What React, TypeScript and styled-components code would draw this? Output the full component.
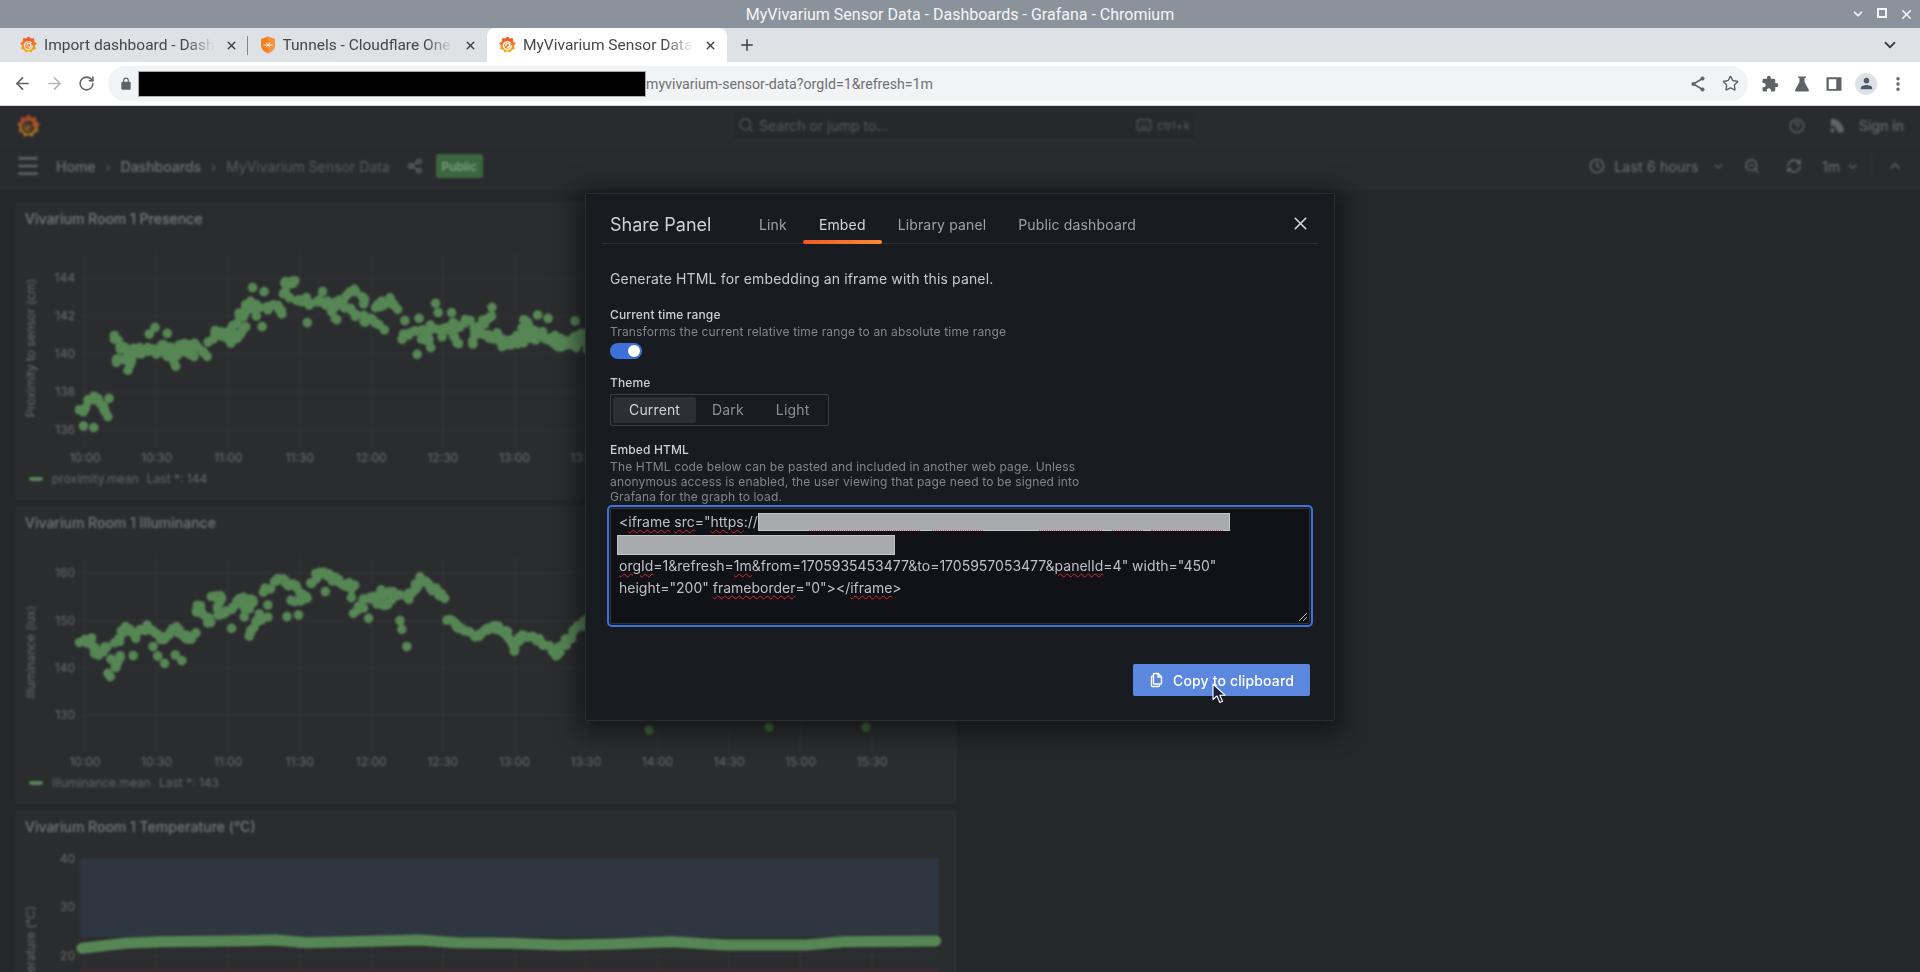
import React from 'react';
import styled, { createGlobalStyle } from 'styled-components';
import {
	ArrowLeft, ArrowRight, ChevronDown, ChevronUp, CircleHelp, Clock, Keyboard, Menu, MoreVertical,
	Plus, RefreshCw, RotateCw, Search, Share2, Star, X, ZoomOut,
} from 'lucide-react';

const GlobalStyle = createGlobalStyle`
  html, body {
    margin: 0;
    padding: 0;
    width: 1920px;
    height: 972px;
    overflow: hidden;
    background: #26272a;
  }
  * { box-sizing: border-box; }
`;

const GREEN = '#578655';

type TPoint = [number, number];

const hash = (n: number): number => {
	const s = Math.sin(n * 127.1) * 43758.5453;
	return s - Math.floor(s);
};

// walks a polyline and drops a jittered dot every few px, the scatter looks close enough to the real series
const trail = (points: TPoint[], seed: number, step = 3.5, jitter = 5): TPoint[] => {
	const dots: TPoint[] = [];
	let n = seed * 100;
	for (let i = 0; i < points.length - 1; i++) {
		const [x1, y1] = points[i];
		const [x2, y2] = points[i + 1];
		const len = Math.hypot(x2 - x1, y2 - y1);
		const count = Math.max(1, Math.round(len / step));
		for (let c = 0; c <= count; c++) {
			n += 1;
			dots.push([
				x1 + ((x2 - x1) * c) / count + (hash(n) - 0.5) * jitter,
				y1 + ((y2 - y1) * c) / count + (hash(n + 0.5) - 0.5) * jitter * 1.6,
			]);
		}
	}
	return dots;
};

const fromZoom = (baseY: number) => (list: TPoint[]): TPoint[] => list.map(([x, y]) => [x / 2.613, baseY + y / 3]);

const presenceTrails: TPoint[][] = [
	[[212, 668], [232, 632], [255, 628], [270, 655], [280, 680]],
	[[293, 440], [320, 475], [345, 505], [332, 545]],
	[[298, 518], [340, 518]],
	[[345, 470], [370, 488], [420, 472], [456, 518]],
	[[350, 490], [440, 485], [500, 465], [530, 480], [543, 500]],
	[[440, 490], [510, 490]],
	[[548, 448], [600, 430], [630, 380], [652, 345]],
	[[560, 420], [600, 450], [640, 420]],
	[[655, 345], [720, 350], [740, 380]],
	[[740, 305], [750, 280], [775, 278]],
	[[760, 330], [850, 340], [875, 385]],
	[[870, 350], [925, 310], [955, 330]],
	[[905, 360], [960, 390], [1000, 420]],
	[[975, 360], [1018, 330], [1040, 355]],
	[[1050, 437], [1100, 420], [1185, 405], [1195, 470]],
	[[1100, 450], [1125, 462]],
	[[1160, 430], [1225, 395]],
	[[1230, 455], [1288, 362]],
	[[1240, 420], [1300, 440], [1330, 460], [1375, 400], [1470, 470], [1530, 420]],
	[[1300, 460], [1440, 440], [1530, 470]],
];

const presenceSingles: TPoint[] = [
	[218, 708], [245, 713], [285, 625], [390, 432], [405, 412], [437, 430], [660, 293], [690, 305], [803, 398],
	[685, 410], [670, 378], [843, 305], [1090, 493], [1138, 340], [1145, 368], [1180, 368], [1095, 385], [1058, 392],
	[1405, 375], [1432, 385], [1503, 393],
];

const illuminanceTrails: TPoint[][] = [
	[[210, 425], [235, 420], [255, 460], [280, 435]],
	[[295, 480], [300, 495], [315, 470]],
	[[305, 425], [330, 385], [350, 410], [380, 380], [425, 425], [460, 385], [490, 415], [508, 395]],
	[[510, 335], [520, 315], [550, 370]],
	[[555, 290], [580, 290], [570, 330]],
	[[570, 350], [635, 295], [660, 300], [640, 345]],
	[[650, 405], [680, 350], [695, 350]],
	[[690, 268], [735, 240], [770, 265], [800, 295], [765, 295]],
	[[810, 250], [835, 220], [880, 240], [930, 265]],
	[[925, 335], [945, 320]],
	[[945, 295], [1000, 275], [1065, 295], [1100, 240], [1135, 265], [1160, 290]],
	[[982, 312], [1025, 305]],
	[[1170, 355], [1200, 385], [1250, 410], [1290, 378], [1320, 395], [1350, 455]],
	[[1340, 435], [1365, 410], [1405, 425], [1455, 460], [1490, 410], [1530, 355]],
];

const illuminanceSingles: TPoint[] = [
	[282, 520], [288, 530], [348, 467], [400, 440], [412, 468], [430, 490], [458, 465], [475, 482], [605, 385],
	[700, 315], [750, 350], [780, 345], [850, 275], [918, 293], [963, 355], [1045, 362], [1050, 388], [1063, 440],
];

const presenceDots: TPoint[] = [
	...presenceTrails.flatMap((t, i) => trail(fromZoom(190)(t), i + 1)),
	...fromZoom(190)(presenceSingles),
];

const illuminanceDots: TPoint[] = [
	...illuminanceTrails.flatMap((t, i) => trail(fromZoom(500)(t), i + 40, 3.2, 4)),
	...fromZoom(500)(illuminanceSingles),
];

const temperatureLine: TPoint[] = [
	[131, 475], [200, 460], [260, 455], [400, 452], [440, 450], [490, 458], [560, 455], [670, 450], [730, 458],
	[820, 460], [900, 465], [980, 462], [1075, 455], [1160, 465], [1290, 465], [1350, 455], [1497, 453],
];
const temperaturePath = temperatureLine
	.map(([x, y], i) => `${i ? 'L' : 'M'}${(x / 1.6).toFixed(1)} ${(790 + y / 3).toFixed(1)}`)
	.join(' ');

const X_LABELS = ['10:00', '10:30', '11:00', '11:30', '12:00', '12:30', '13:00', '13:30', '14:00', '14:30', '15:00', '15:30'];
const xAt = (i: number): number => 85 + i * 71.56;

const URL_SQUIGGLES: [number, number][] = [[50, 111], [173, 51], [280, 63], [353, 31], [392, 72]];

const Root = styled.div`
  width: 1920px;
  height: 972px;
  display: flex;
  flex-direction: column;
  overflow: hidden;
  font-family: Roboto, "Liberation Sans", sans-serif;
`;

const TitleBar = styled.div`
  height: 28px;
  flex: none;
  background: #8a939c;
  color: #f4f5f6;
  font-size: 16px;
  display: grid;
  grid-template-columns: 1fr auto 1fr;
  align-items: center;
`;

const WindowTitle = styled.span`
  grid-column: 2;
`;

const WindowControls = styled.div`
  grid-column: 3;
  justify-self: end;
  display: flex;
  padding-right: 2px;
  & > * { width: 24px; display: flex; justify-content: center; }
`;

const TabStrip = styled.div`
  height: 34px;
  flex: none;
  background: #dee1e6;
  display: flex;
  align-items: stretch;
  padding-left: 8px;
`;

const Tab = styled.div<{ $active?: boolean; $divider?: boolean }>`
  position: relative;
  width: 239.5px;
  padding-left: 12px;
  display: flex;
  align-items: center;
  color: #45474a;
  font-size: 15.5px;
  background: ${(p) => (p.$active ? '#fff' : 'transparent')};
  border-radius: 8px 8px 0 0;
  ${(p) => p.$divider && `
    &::after {
      content: '';
      position: absolute;
      right: 0;
      top: 8px;
      bottom: 7px;
      width: 1px;
      background: #85878b;
    }
  `}
`;

const TabTitle = styled.span`
  width: 170px;
  margin-left: 7px;
  white-space: nowrap;
  overflow: hidden;
  -webkit-mask-image: linear-gradient(to right, #000 84%, transparent 100%);
  mask-image: linear-gradient(to right, #000 84%, transparent 100%);
`;

const TabClose = styled.span`
  margin-left: 11px;
  display: flex;
  color: #3c3e41;
`;

const NewTab = styled.span`
  margin-left: 11px;
  display: flex;
  align-items: center;
  color: #3c4043;
`;

const StripEnd = styled.span`
  margin-left: auto;
  padding-right: 21px;
  display: flex;
  align-items: center;
  color: #3c4043;
`;

const Toolbar = styled.div`
  height: 44px;
  flex: none;
  background: #fff;
  border-bottom: 1px solid #d4d5d7;
  padding: 4px 6px 4px 6px;
  display: flex;
  align-items: flex-start;
`;

const ToolButton = styled.span<{ $muted?: boolean }>`
  width: 32px;
  height: 35px;
  display: flex;
  align-items: center;
  justify-content: center;
  color: ${(p) => (p.$muted ? '#b5b7ba' : '#5f6368')};
`;

const Omnibox = styled.div`
  width: 1640px;
  height: 35px;
  margin: 0 6px;
  background: #f1f3f4;
  border-radius: 18px;
  display: flex;
  align-items: center;
  padding-left: 11px;
  padding-right: 9px;
  color: #5f6368;
`;

const UrlMask = styled.span`
  width: 508px;
  height: 26px;
  margin-left: 5px;
  background: #000;
  border: 1px solid #a9abad;
`;

const UrlText = styled.span`
  color: #6f7175;
  font-size: 14.15px;
`;

const OmniEnd = styled.span`
  margin-left: auto;
  display: flex;
  gap: 15px;
  align-items: center;
`;

const Avatar = styled.span`
  width: 22px;
  height: 22px;
  border-radius: 50%;
  background: #dee1e6;
  display: flex;
  align-items: center;
  justify-content: center;
  color: #4d5a6b;
`;

const GrafanaArea = styled.div`
  position: relative;
  flex: 1;
  min-height: 0;
  overflow: hidden;
  background: #26272a;
  font-family: Inter, "Liberation Sans", sans-serif;
`;

const Blurred = styled.div`
  height: 100%;
  filter: blur(1px);
`;

const TopNav = styled.div`
  height: 40px;
  background: #2a2b2e;
  border-bottom: 1px solid #2d2e31;
  display: grid;
  grid-template-columns: 732px 465px 1fr;
  align-items: center;
`;

const LogoSlot = styled.div`
  padding: 2px 0 0 17px;
  display: flex;
  opacity: 0.6;
`;

const SearchBox = styled.div`
  height: 29px;
  margin-top: -1px;
  background: #27282b;
  border: 1px solid #2d2e31;
  color: #54565a;
  font-size: 14px;
  display: flex;
  align-items: center;
  padding: 0 6px 0 5px;
`;

const SearchText = styled.span`
  margin-left: 5px;
`;

const Shortcut = styled.span`
  margin-left: auto;
  display: flex;
  align-items: center;
  gap: 5px;
  font-size: 12px;
`;

const NavEnd = styled.div`
  display: flex;
  justify-content: flex-end;
  align-items: center;
  gap: 24px;
  padding-right: 16px;
  color: #626366;
`;

const SignIn = styled.span`
  margin-left: -11px;
  font-size: 14px;
  font-weight: 500;
`;

const SubNav = styled.div`
  height: 44px;
  background: #2a2b2e;
  display: flex;
  align-items: center;
  padding: 0 17px 4px 15px;
  color: #6b6c6f;
  font-size: 14px;
`;

const Crumb = styled.span<{ $current?: boolean }>`
  font-weight: ${(p) => (p.$current ? 400 : 500)};
  color: ${(p) => (p.$current ? '#56585c' : '#6b6c6f')};
`;

const CrumbSep = styled.span`
  width: 25px;
  text-align: center;
  color: #55575a;
`;

const Spaced = styled.span<{ $ml: number }>`
  margin-left: ${(p) => p.$ml}px;
  display: flex;
  align-items: center;
`;

const RangeLabel = styled(Spaced)`
  letter-spacing: 0.2px;
`;

const PublicBadge = styled.span`
  margin-left: 13px;
  width: 47px;
  height: 24px;
  border-radius: 2px;
  background: #3b653e;
  color: #7fa880;
  font-size: 12px;
  font-weight: 500;
  display: flex;
  align-items: center;
  justify-content: center;
`;

const SubNavEnd = styled.div`
  margin-left: auto;
  display: flex;
  align-items: center;
`;

const Divider = styled.span`
  margin-left: 12px;
  width: 1px;
  height: 24px;
  background: #333437;
`;

const PanelColumn = styled.div`
  width: 940px;
  margin: 13px 0 0 16px;
  display: flex;
  flex-direction: column;
  gap: 8px;
`;

const Panel = styled.section`
  height: 296px;
  flex: none;
  background: #2b2c2e;
  border: 1px solid #2f3032;
  display: flex;
  flex-direction: column;
`;

const PanelTitle = styled.h2`
  margin: 0;
  height: 31px;
  padding: 6px 0 0 8px;
  color: #77787b;
  font-size: 14px;
  line-height: 18px;
  font-weight: 500;
`;

const ChartSvg = styled.svg`
  display: block;
  width: 938px;
  height: 232px;
  flex: none;
`;

const AxisText = styled.text`
  fill: #696a6d;
  font-size: 12px;
  font-family: Inter, "Liberation Sans", sans-serif;
`;

const Legend = styled.div`
  height: 23px;
  padding-left: 12px;
  display: flex;
  align-items: center;
  color: #66676a;
  font-size: 12px;
`;

const LegendSwatch = styled.i`
  width: 14px;
  height: 4px;
  margin-right: 9px;
  border-radius: 2px;
  background: ${GREEN};
`;

const LegendValue = styled.span`
  margin-left: 8px;
`;

const Dialog = styled.div`
  position: absolute;
  left: 585px;
  top: 87px;
  width: 750px;
  background: #181b20;
  border: 1px solid #2a2d31;
  border-radius: 2px;
  box-shadow: 0 4px 24px 6px rgba(5, 6, 9, 0.6);
  padding: 0 24px 24px;
  color: #ccccd4;
  letter-spacing: 0.15px;
`;

const DialogHeader = styled.div`
  margin: 0 -8px;
  padding: 0 8px;
  height: 50px;
  border-bottom: 1px solid #2c2f34;
  display: flex;
  align-items: flex-end;
`;

const DialogTitle = styled.h1`
  width: 133px;
  height: 40px;
  margin: 0;
  font-size: 18px;
  font-weight: 400;
  line-height: 44px;
  letter-spacing: 0;
  color: #d0d1d7;
`;

const TabBar = styled.div`
  display: flex;
`;

const ShareTab = styled.span<{ $active?: boolean }>`
  position: relative;
  height: 40px;
  padding: 0 16px;
  font-size: 14px;
  line-height: 44px;
  color: ${(p) => (p.$active ? '#d6d7dc' : '#a0a1a8')};
  ${(p) => p.$active && `
    &::after {
      content: '';
      position: absolute;
      left: 0;
      right: 0;
      bottom: -1px;
      height: 4px;
      border-radius: 2px;
      background: linear-gradient(90deg, #f05a28, #fb8a32);
    }
  `}
`;

const CloseButton = styled.span`
  margin-left: auto;
  height: 40px;
  display: flex;
  align-items: center;
  margin-top: -8px;
  margin-right: -1px;
  color: #dcdde1;
`;

const Lead = styled.p`
  margin: 25px 0 0;
  font-size: 14px;
  line-height: 20px;
  color: #c9cad0;
`;

const FieldLabel = styled.label<{ $mt: number }>`
  display: block;
  margin-top: ${(p) => p.$mt}px;
  font-size: 12px;
  line-height: 16px;
  font-weight: 500;
  color: #cfd0d6;
`;

const FieldHint = styled.p`
  margin: 1px 0 0;
  max-width: 480px;
  font-size: 12px;
  line-height: 16px;
  color: #84868c;
`;

const EmbedHint = styled(FieldHint)`
  line-height: 15px;
`;

const Toggle = styled.span`
  display: flex;
  align-items: center;
  justify-content: flex-end;
  width: 32px;
  height: 16px;
  margin-top: 3px;
  padding-right: 2px;
  border-radius: 8px;
  background: #3d71d9;
  &::after {
    content: '';
    width: 12px;
    height: 12px;
    border-radius: 50%;
    background: #fff;
  }
`;

const RadioGroup = styled.div`
  width: 219px;
  height: 32px;
  margin-top: 3px;
  padding: 2px;
  border: 1px solid #3d3f44;
  border-radius: 2px;
  display: flex;
`;

const RadioOption = styled.span<{ $active?: boolean }>`
  padding: 0 16px;
  line-height: 26px;
  font-size: 14px;
  border-radius: 2px;
  color: ${(p) => (p.$active ? '#d2d3d8' : '#8f9096')};
  background: ${(p) => (p.$active ? '#2c3036' : 'transparent')};
`;

const CodeBox = styled.div`
  position: relative;
  height: 116px;
  margin-top: 4px;
  padding: 2px 8px;
  background: #111217;
  border: 1px solid #2f3136;
  border-radius: 2px;
  box-shadow: 0 0 0 1px #181b20, 0 0 0 3px #3d71d9;
  color: #bfc0c5;
  font-size: 14px;
  line-height: 22px;
  letter-spacing: 0;
`;

const CodeLine = styled.div`
  height: 22px;
  white-space: nowrap;
`;

const Misspelt = styled.span`
  text-decoration: underline wavy #d8262c 1px;
  text-underline-offset: 2px;
`;

const Redacted = styled.span<{ $width: number; $height: number }>`
  position: relative;
  display: inline-block;
  vertical-align: top;
  margin-top: 2px;
  width: ${(p) => p.$width}px;
  height: ${(p) => p.$height}px;
  background: #a9aaad;
  border: 1px solid #c4c5c8;
`;

const LineTwoRedacted = styled(Redacted)`
  margin-left: -2px;
`;

const Squiggle = styled.i<{ $left: number; $width: number }>`
  position: absolute;
  top: 100%;
  left: ${(p) => p.$left}px;
  width: ${(p) => p.$width}px;
  border-bottom: 1px dotted #d8262c;
  opacity: 0.65;
`;

const ResizeGrip = styled.svg`
  position: absolute;
  right: 1px;
  bottom: 1px;
`;

const DialogFooter = styled.div`
  margin-top: 40px;
  display: flex;
  justify-content: flex-end;
`;

const CopyButton = styled.span`
  width: 177px;
  height: 32px;
  padding-left: 16px;
  border-radius: 2px;
  background: #5b87de;
  color: #fff;
  font-size: 14px;
  font-weight: 500;
  display: flex;
  align-items: center;
  gap: 8px;
`;

const Pointer = styled.svg`
  position: absolute;
  left: 1212px;
  top: 577px;
`;

function GrafanaLogo({ id, hole, size = 17 }: { id: string; hole: string; size?: number }): React.JSX.Element {
	const gear = Array.from({ length: 18 }, (_, i) => {
		const r = i % 2 ? 8.6 : 11.2;
		const a = (i / 18) * Math.PI * 2 - Math.PI / 2;
		return `${(12 + r * Math.cos(a)).toFixed(2)},${(12.4 + r * Math.sin(a)).toFixed(2)}`;
	}).join(' ');
	return (
		<svg width={size} height={size * 1.08} viewBox="0 0 24 26">
			<defs>
				<linearGradient id={id} x1="0" y1="0" x2="0" y2="1">
					<stop offset="0" stopColor="#f0492b" />
					<stop offset="1" stopColor="#fbb40f" />
				</linearGradient>
			</defs>
			<polygon points={gear} fill={`url(#${id})`} stroke={`url(#${id})`} strokeWidth="1.4" strokeLinejoin="round" />
			<path d="M15.8 9.6a5.6 5.6 0 1 0 1.6 4.6M9.6 13.6a2.8 2.8 0 1 1 2.8 2.4" fill="none" stroke={hole} strokeWidth="2" strokeLinecap="round" />
		</svg>
	);
}

function CloudflareShield(): React.JSX.Element {
	return (
		<svg width="16" height="18" viewBox="0 0 16 18">
			<path d="M8 0.5 L15 3 V9 C15 13 12 16 8 17.5 C4 16 1 13 1 9 V3 Z" fill="#f38020" />
			<path d="M8 0.5 V17.5 C12 16 15 13 15 9 V3 Z" fill="#f9a352" opacity="0.55" />
			<path d="M3.5 9 H12.5 M6 6.5 L8 9 L6 11.5 M10 6.5 L8 9 L10 11.5" stroke="#fff" strokeWidth="1" fill="none" opacity="0.8" />
		</svg>
	);
}

function FilledIcon({ d, size = 18 }: { d: string; size?: number }): React.JSX.Element {
	return (
		<svg width={size} height={size} viewBox="0 0 24 24" fill="currentColor">
			<path d={d} />
		</svg>
	);
}

const LOCK = 'M18 8h-1V6c0-2.76-2.24-5-5-5S7 3.24 7 6v2H6c-1.1 0-2 .9-2 2v10c0 1.1.9 2 2 2h12c1.1 0 2-.9 2-2V10c0-1.1-.9-2-2-2zM9 6c0-1.66 1.34-3 3-3s3 1.34 3 3v2H9V6z';
const PUZZLE = 'M20.5 11H19V7c0-1.1-.9-2-2-2h-4V3.5C13 2.12 11.88 1 10.5 1S8 2.12 8 3.5V5H4c-1.1 0-1.99.9-1.99 2v3.8H3.5c1.49 0 2.7 1.21 2.7 2.7s-1.21 2.7-2.7 2.7H2V20c0 1.1.9 2 2 2h3.8v-1.5c0-1.49 1.21-2.7 2.7-2.7 1.49 0 2.7 1.21 2.7 2.7V22H17c1.1 0 2-.9 2-2v-4h1.5c1.38 0 2.5-1.12 2.5-2.5S21.88 11 20.5 11z';
const FLASK = 'M7 2h10v2h-1.6v5.2L21 19.6c.7 1.3-.2 2.4-1.6 2.4H4.6c-1.4 0-2.3-1.1-1.6-2.4L8.6 9.2V4H7z';
const SIDE_PANEL = 'M2 3h20v18H2zM5 5.5v13h10v-13z';
const PERSON = 'M12 12c2.21 0 4-1.79 4-4s-1.79-4-4-4-4 1.79-4 4 1.79 4 4 4zm0 2c-2.67 0-8 1.34-8 4v2h16v-2c0-2.66-5.33-4-8-4z';
const NEWS = 'M5 22a3 3 0 1 1 0-6 3 3 0 0 1 0 6zM2 12a10 10 0 0 1 10 10h9C21 10 13 2 3 2z';

function CopyIcon(): React.JSX.Element {
	return (
		<svg width="16" height="16" viewBox="0 0 16 16" fill="none" stroke="#fff" strokeWidth="1.4" strokeLinejoin="round">
			<path d="M5.5 1.5h3.8l3.2 3.2v6.3a1 1 0 0 1-1 1H5.5a1 1 0 0 1-1-1V2.5a1 1 0 0 1 1-1z" />
			<path d="M9 1.8V5h3.2" />
			<path d="M4.5 4H3.5a1 1 0 0 0-1 1v8.5a1 1 0 0 0 1 1h6a1 1 0 0 0 1-1v-1" />
		</svg>
	);
}

function PlotFrame({ top, ticks, showX = true, children }: {
	top: number;
	ticks: { label: string; y: number }[];
	showX?: boolean;
	children?: React.ReactNode;
}): React.JSX.Element {
	return (
		<ChartSvg viewBox={`17 ${top + 32} 938 232`}>
			{X_LABELS.map((label, i) => <line key={label} x1={xAt(i)} x2={xAt(i)} y1={top + 50} y2={top + 246} stroke="#343538" />)}
			{ticks.map((t) => <line key={t.label} x1={82} x2={940} y1={t.y} y2={t.y} stroke="#343538" />)}
			{children}
			{ticks.map((t) => <AxisText key={t.label} x={75} y={t.y + 4} textAnchor="end">{t.label}</AxisText>)}
			{showX && X_LABELS.map((label, i) => <AxisText key={label} x={xAt(i)} y={top + 259} textAnchor="middle">{label}</AxisText>)}
		</ChartSvg>
	);
}

function DotSeries({ dots }: { dots: TPoint[] }): React.JSX.Element {
	return (
		<g fill={GREEN}>
			{dots.map(([x, y], i) => <circle key={i} cx={x} cy={y} r={4.8} />)}
		</g>
	);
}

function AxisTitle({ y, children }: { y: number; children: string }): React.JSX.Element {
	return <AxisText x={31} y={y} textAnchor="middle" transform={`rotate(-90 31 ${y})`} dy="4">{children}</AxisText>;
}

function App(): React.JSX.Element {
	return (
		<Root>
			<GlobalStyle />
			<TitleBar>
				<WindowTitle>MyVivarium Sensor Data - Dashboards - Grafana - Chromium</WindowTitle>
				<WindowControls>
					<span><ChevronDown size={14} strokeWidth={3} /></span>
					<span><svg width="12" height="12" viewBox="0 0 12 12"><rect x="2" y="2" width="8" height="8" fill="none" stroke="currentColor" strokeWidth="2" /></svg></span>
					<span><X size={15} strokeWidth={2.6} /></span>
				</WindowControls>
			</TitleBar>
			<TabStrip>
				<Tab $divider>
					<GrafanaLogo id="tabLogoA" hole="#dee1e6" />
					<TabTitle>Import dashboard - Dashboards</TabTitle>
					<TabClose><X size={13} strokeWidth={2.6} /></TabClose>
				</Tab>
				<Tab>
					<CloudflareShield />
					<TabTitle>Tunnels - Cloudflare One</TabTitle>
					<TabClose><X size={13} strokeWidth={2.6} /></TabClose>
				</Tab>
				<Tab $active>
					<GrafanaLogo id="tabLogoB" hole="#fff" />
					<TabTitle>MyVivarium Sensor Data - Dashboards</TabTitle>
					<TabClose><X size={13} strokeWidth={2.6} /></TabClose>
				</Tab>
				<NewTab><Plus size={18} strokeWidth={2} /></NewTab>
				<StripEnd><ChevronDown size={18} strokeWidth={2.4} /></StripEnd>
			</TabStrip>
			<Toolbar>
				<ToolButton><ArrowLeft size={19} strokeWidth={2.2} /></ToolButton>
				<ToolButton $muted><ArrowRight size={19} strokeWidth={2.2} /></ToolButton>
				<ToolButton><RotateCw size={17} strokeWidth={2.2} /></ToolButton>
				<Omnibox>
					<FilledIcon d={LOCK} size={14} />
					<UrlMask />
					<UrlText>myvivarium-sensor-data?orgId=1&amp;refresh=1m</UrlText>
					<OmniEnd>
						<svg width="18" height="18" viewBox="0 0 18 18" fill="currentColor" stroke="currentColor"><path d="M13.5 3.5 4.5 9l9 5.5" fill="none" strokeWidth="1.6" /><circle cx="13.5" cy="3.5" r="1.6" /><circle cx="4.5" cy="9" r="1.6" /><circle cx="13.5" cy="14.5" r="1.6" /></svg>
						<Star size={17} strokeWidth={2} />
					</OmniEnd>
				</Omnibox>
				<ToolButton><FilledIcon d={PUZZLE} /></ToolButton>
				<ToolButton><FilledIcon d={FLASK} /></ToolButton>
				<ToolButton><FilledIcon d={SIDE_PANEL} /></ToolButton>
				<ToolButton><Avatar><FilledIcon d={PERSON} size={17} /></Avatar></ToolButton>
				<ToolButton><MoreVertical size={18} strokeWidth={2.6} /></ToolButton>
			</Toolbar>
			<GrafanaArea>
				<Blurred>
					<TopNav>
						<LogoSlot><GrafanaLogo id="navLogo" hole="#2a2b2e" size={23} /></LogoSlot>
						<SearchBox>
							<Search size={16} />
							<SearchText>Search or jump to...</SearchText>
							<Shortcut><Keyboard size={16} />ctrl+k</Shortcut>
						</SearchBox>
						<NavEnd>
							<CircleHelp size={16} />
							<FilledIcon d={NEWS} size={17} />
							<SignIn>Sign in</SignIn>
						</NavEnd>
					</TopNav>
					<SubNav>
						<Menu size={26} strokeWidth={2} />
						<Spaced $ml={15}><Crumb>Home</Crumb></Spaced>
						<CrumbSep>›</CrumbSep>
						<Crumb>Dashboards</Crumb>
						<CrumbSep>›</CrumbSep>
						<Crumb $current>MyVivarium Sensor Data</Crumb>
						<Spaced $ml={17}><Share2 size={16} /></Spaced>
						<PublicBadge>Public</PublicBadge>
						<SubNavEnd>
							<Clock size={16} />
							<RangeLabel $ml={9}>Last 6 hours</RangeLabel>
							<Spaced $ml={13}><ChevronDown size={13} /></Spaced>
							<Spaced $ml={19}><ZoomOut size={16} /></Spaced>
							<Spaced $ml={26.5}><RefreshCw size={16} /></Spaced>
							<Spaced $ml={20}>1m</Spaced>
							<Spaced $ml={6}><ChevronDown size={13} /></Spaced>
							<Divider />
							<Spaced $ml={15}><ChevronUp size={16} /></Spaced>
						</SubNavEnd>
					</SubNav>
					<PanelColumn>
						<Panel>
							<PanelTitle>Vivarium Room 1 Presence</PanelTitle>
							<PlotFrame top={203} ticks={[{ label: '144', y: 278 }, { label: '142', y: 316 }, { label: '140', y: 354 }, { label: '138', y: 392 }, { label: '136', y: 430 }]}>
								<DotSeries dots={presenceDots} />
								<AxisTitle y={348}>Proximity to sensor (cm)</AxisTitle>
							</PlotFrame>
							<Legend><LegendSwatch />proximity.mean<LegendValue>Last *: 144</LegendValue></Legend>
						</Panel>
						<Panel>
							<PanelTitle>Vivarium Room 1 Illuminance</PanelTitle>
							<PlotFrame top={507} ticks={[{ label: '160', y: 573 }, { label: '150', y: 621 }, { label: '140', y: 668 }, { label: '130', y: 715 }]}>
								<DotSeries dots={illuminanceDots} />
								<g fill="#3f6b3c">
									<circle cx={649} cy={730} r={4.6} />
									<circle cx={769} cy={727} r={4.6} />
									<circle cx={866} cy={727} r={4.6} />
								</g>
								<AxisTitle y={652}>Illuminance (lux)</AxisTitle>
							</PlotFrame>
							<Legend><LegendSwatch />illuminance.mean<LegendValue>Last *: 143</LegendValue></Legend>
						</Panel>
						<Panel>
							<PanelTitle>Vivarium Room 1 Temperature (°C)</PanelTitle>
							<PlotFrame top={811} showX={false} ticks={[{ label: '40', y: 859 }, { label: '30', y: 907 }, { label: '20', y: 956 }]}>
								<rect x={80} y={859} width={859} height={78} fill="#2e3641" />
								<rect x={80} y={969} width={859} height={30} fill="#3a2d31" />
								<path d={temperaturePath} fill="none" stroke={GREEN} strokeWidth={11} strokeLinecap="round" strokeLinejoin="round" />
								<AxisTitle y={955}>Temperature (°C)</AxisTitle>
							</PlotFrame>
						</Panel>
					</PanelColumn>
				</Blurred>
				<Dialog>
					<DialogHeader>
						<DialogTitle>Share Panel</DialogTitle>
						<TabBar>
							<ShareTab>Link</ShareTab>
							<ShareTab $active>Embed</ShareTab>
							<ShareTab>Library panel</ShareTab>
							<ShareTab>Public dashboard</ShareTab>
						</TabBar>
						<CloseButton><X size={21} strokeWidth={1.8} /></CloseButton>
					</DialogHeader>
					<Lead>Generate HTML for embedding an iframe with this panel.</Lead>
					<FieldLabel $mt={18}>Current time range</FieldLabel>
					<FieldHint>Transforms the current relative time range to an absolute time range</FieldHint>
					<Toggle />
					<FieldLabel $mt={16}>Theme</FieldLabel>
					<RadioGroup>
						<RadioOption $active>Current</RadioOption>
						<RadioOption>Dark</RadioOption>
						<RadioOption>Light</RadioOption>
					</RadioGroup>
					<FieldLabel $mt={16}>Embed HTML</FieldLabel>
					<EmbedHint>The HTML code below can be pasted and included in another web page. Unless anonymous access is enabled, the user viewing that page need to be signed into Grafana for the graph to load.</EmbedHint>
					<CodeBox>
						<CodeLine>
							&lt;<Misspelt>iframe</Misspelt> <Misspelt>src</Misspelt>="<Misspelt>https</Misspelt>://
							<Redacted $width={472} $height={18}>
								{URL_SQUIGGLES.map(([left, width]) => <Squiggle key={left} $left={left} $width={width} />)}
							</Redacted>
						</CodeLine>
						<CodeLine><LineTwoRedacted $width={278} $height={20} /></CodeLine>
						<CodeLine><Misspelt>orgId</Misspelt>=1&amp;refresh=<Misspelt>1m</Misspelt>&amp;from=1705935453477&amp;to=1705957053477&amp;<Misspelt>panelId</Misspelt>=4" width="450"</CodeLine>
						<CodeLine>height="200" <Misspelt>frameborder</Misspelt>="0"&gt;&lt;/<Misspelt>iframe</Misspelt>&gt;</CodeLine>
						<ResizeGrip width="12" height="12" viewBox="0 0 12 12" stroke="#b8b9bd" strokeWidth="1">
							<path d="M11 3 3 11M11 7 7 11" />
						</ResizeGrip>
					</CodeBox>
					<DialogFooter>
						<CopyButton><CopyIcon />Copy to clipboard</CopyButton>
					</DialogFooter>
				</Dialog>
				<Pointer width="16" height="22" viewBox="0 0 16 22">
					<path d="M1 1 V16.5 L5 13 L7.8 19.5 L10.6 18.3 L7.8 12.2 H13 Z" fill="#1b2140" stroke="#fff" strokeWidth="1.1" strokeLinejoin="round" />
				</Pointer>
			</GrafanaArea>
		</Root>
	);
}

export default App;
